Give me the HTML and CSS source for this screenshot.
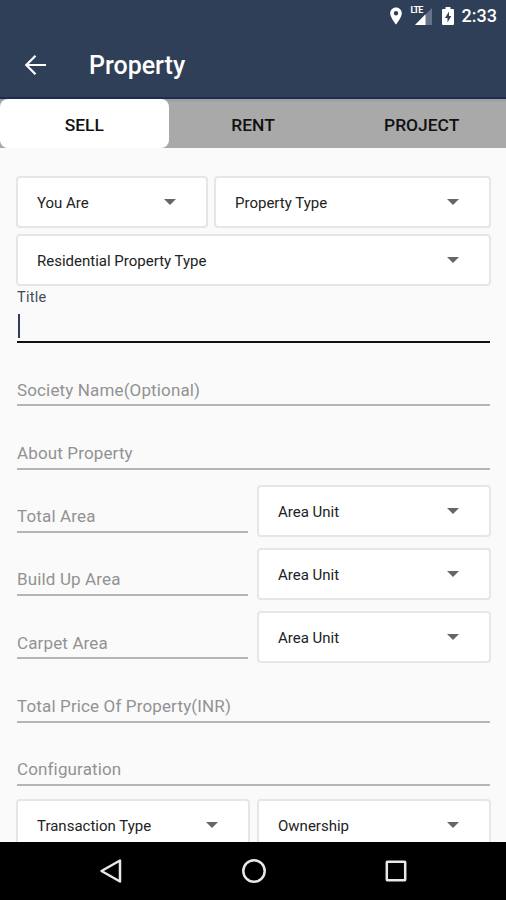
FILE: index.html
```html
<!DOCTYPE html>
<html lang="en">
<head>
<meta charset="utf-8">
<title>Property</title>
<link rel="stylesheet" href="styles.css">
</head>
<body>
<div class="screen">
  <div class="status">
    <svg class="pin" viewBox="0 0 12 18"><path fill="#fff" fill-rule="evenodd" d="M6 .5C2.7.5.2 3 .2 6.2.2 10.500 6 17.500 6 17.500s5.800-7 5.800-11.300C11.800 3 9.300.5 6 .5zM6 4a2.200 2.200 0 1 1 0 4.400A2.200 2.200 0 0 1 6 4z"/></svg>
    <div class="signal">
      <span class="lte">LTE</span>
      <svg viewBox="0 0 18 17"><path fill="#66738a" d="M18 0v17H1z"/><path fill="#fff" d="M11.500 6.200V17H1z"/></svg>
    </div>
    <svg class="battery" viewBox="0 0 12 18"><path fill="#fff" d="M3.500 0h5v2H11a1 1 0 0 1 1 1v14a1 1 0 0 1-1 1H1a1 1 0 0 1-1-1V3a1 1 0 0 1 1-1h2.500z"/><path fill="#303f58" d="M7 4.500 3 11h2.500v4.500L9.300 9H7z"/></svg>
    <span class="clock">2:33</span>
  </div>
  <header class="appbar">
    <svg class="back" viewBox="0 0 22 20"><path fill="none" stroke="#fff" stroke-width="2.200" d="M22 10H2.500M11.500 .8 2.300 10l9.200 9.200"/></svg>
    <h1>Property</h1>
  </header>
  <nav class="tabs">
    <div class="tab active">SELL</div>
    <div class="tab">RENT</div>
    <div class="tab">PROJECT</div>
  </nav>
  <main class="form">
    <div class="row first">
      <div class="select you"><span>You Are</span><i></i></div>
      <div class="select"><span>Property Type</span><i></i></div>
    </div>
    <div class="row second">
      <div class="select"><span>Residential Property Type</span><i></i></div>
    </div>
    <div class="title-field">
      <label>Title</label>
      <div class="input"><b class="caret"></b></div>
    </div>
    <div class="field"><span>Society Name(Optional)</span></div>
    <div class="field"><span>About Property</span></div>
    <div class="row area">
      <div class="field"><span>Total Area</span></div>
      <div class="select"><span>Area Unit</span><i></i></div>
    </div>
    <div class="row area">
      <div class="field"><span>Build Up Area</span></div>
      <div class="select"><span>Area Unit</span><i></i></div>
    </div>
    <div class="row area">
      <div class="field"><span>Carpet Area</span></div>
      <div class="select"><span>Area Unit</span><i></i></div>
    </div>
    <div class="field"><span>Total Price Of Property(INR)</span></div>
    <div class="field"><span>Configuration</span></div>
    <div class="row last">
      <div class="select"><span>Transaction Type</span><i></i></div>
      <div class="select"><span>Ownership</span><i></i></div>
    </div>
  </main>
  <footer class="navbar">
    <svg viewBox="0 0 24 24"><path d="M21 1.500v21L2.500 12z"/></svg>
    <svg viewBox="0 0 24 24"><circle cx="12" cy="12" r="10.700"/></svg>
    <svg viewBox="0 0 24 24"><rect x="2.800" y="2.800" width="18.400" height="18.400" rx=".5"/></svg>
  </footer>
</div>
</body>
</html>
```

FILE: styles.css
```css
* { box-sizing: border-box; }
body { margin: 0; font-family: Roboto, "Liberation Sans", sans-serif; }
.screen { width: 506px; height: 900px; display: flex; flex-direction: column; background: #fafafa; overflow: hidden; }
.status { height: 32px; flex: none; background: #303f58; display: flex; align-items: center; padding-right: 9px; justify-content: flex-end; color: #fff; }
.pin { width: 12px; height: 18px; margin-right: 9px; }
.signal { position: relative; width: 22px; height: 18px; margin-right: 9px; }
.signal svg { display: block; width: 18px; height: 17px; margin: 1px 0 0 3px; }
.lte { position: absolute; left: 0; top: -1px; font-size: 9px; line-height: 9px; font-weight: 700; letter-spacing: -0.9px; background: #303f58; }
.battery { width: 12px; height: 18px; margin-right: 8px; }
.clock { font-size: 18px; line-height: 32px; font-weight: 500; }
.appbar { height: 67px; flex: none; background: #303f58; border-bottom: 2px solid #1b2d50; display: flex; align-items: center; padding-left: 24px; color: #fff; }
.back { width: 22px; height: 20px; }
.appbar h1 { margin: 3px 0 0 43px; font-size: 25px; font-weight: 500; line-height: 32px; }
.tabs { height: 49px; flex: none; background: linear-gradient(#9c9c9c, #a9a9a9 4px); display: flex; }
.tab { flex: 1; display: flex; align-items: center; justify-content: center; font-size: 17.400px; font-weight: 500; color: #111; padding-top: 2px; }
.tab.active { background: #fff; border-radius: 8px; }
.form { height: 694px; flex: none; padding: 28px 15px 0 16px; overflow: hidden; }
.row { display: flex; gap: 6px; }
.select { flex: 1; height: 52px; min-width: 0; background: #fff; border: 2px solid #e6e6e6; border-radius: 4px; display: flex; align-items: center; justify-content: space-between; padding: 2px 30px 0 19px; font-size: 15px; color: #222; white-space: nowrap; }
.select i { border: 6px solid transparent; border-top-color: #666; border-bottom: 0; margin-bottom: 2px; }
.you { flex: 0 0 192px; }
.first { margin-bottom: 6px; }
.title-field { height: 61px; padding: 3px 1px 4px 1px; }
.title-field label { display: block; font-size: 14.500px; line-height: 18px; letter-spacing: .25px; color: #444b58; }
.input { height: 36px; border-bottom: 2px solid #111; padding-top: 7px; }
.caret { display: block; width: 2px; height: 24px; margin-left: 1px; background: #303f58; }
.field { height: 63.300px; margin: 0 1px; padding-bottom: 4px; display: flex; }
.field span { flex: 1; border-bottom: 2px solid #b5b5b5; padding-top: 32.500px; font-size: 17px; line-height: 20px; letter-spacing: .14px; color: #929292; white-space: nowrap; }
.area { height: 63.300px; align-items: flex-end; gap: 8px; }
.area .field { flex: 0 0 231px; }
.last { padding-top: 9px; gap: 7px; }
.navbar { flex: 1; background: #000; display: flex; justify-content: center; align-items: center; gap: 118.500px; padding-left: 1px; }
.navbar svg { width: 24px; height: 24px; fill: none; stroke: #e8e8e8; stroke-width: 2.500; stroke-linejoin: round; }
```
